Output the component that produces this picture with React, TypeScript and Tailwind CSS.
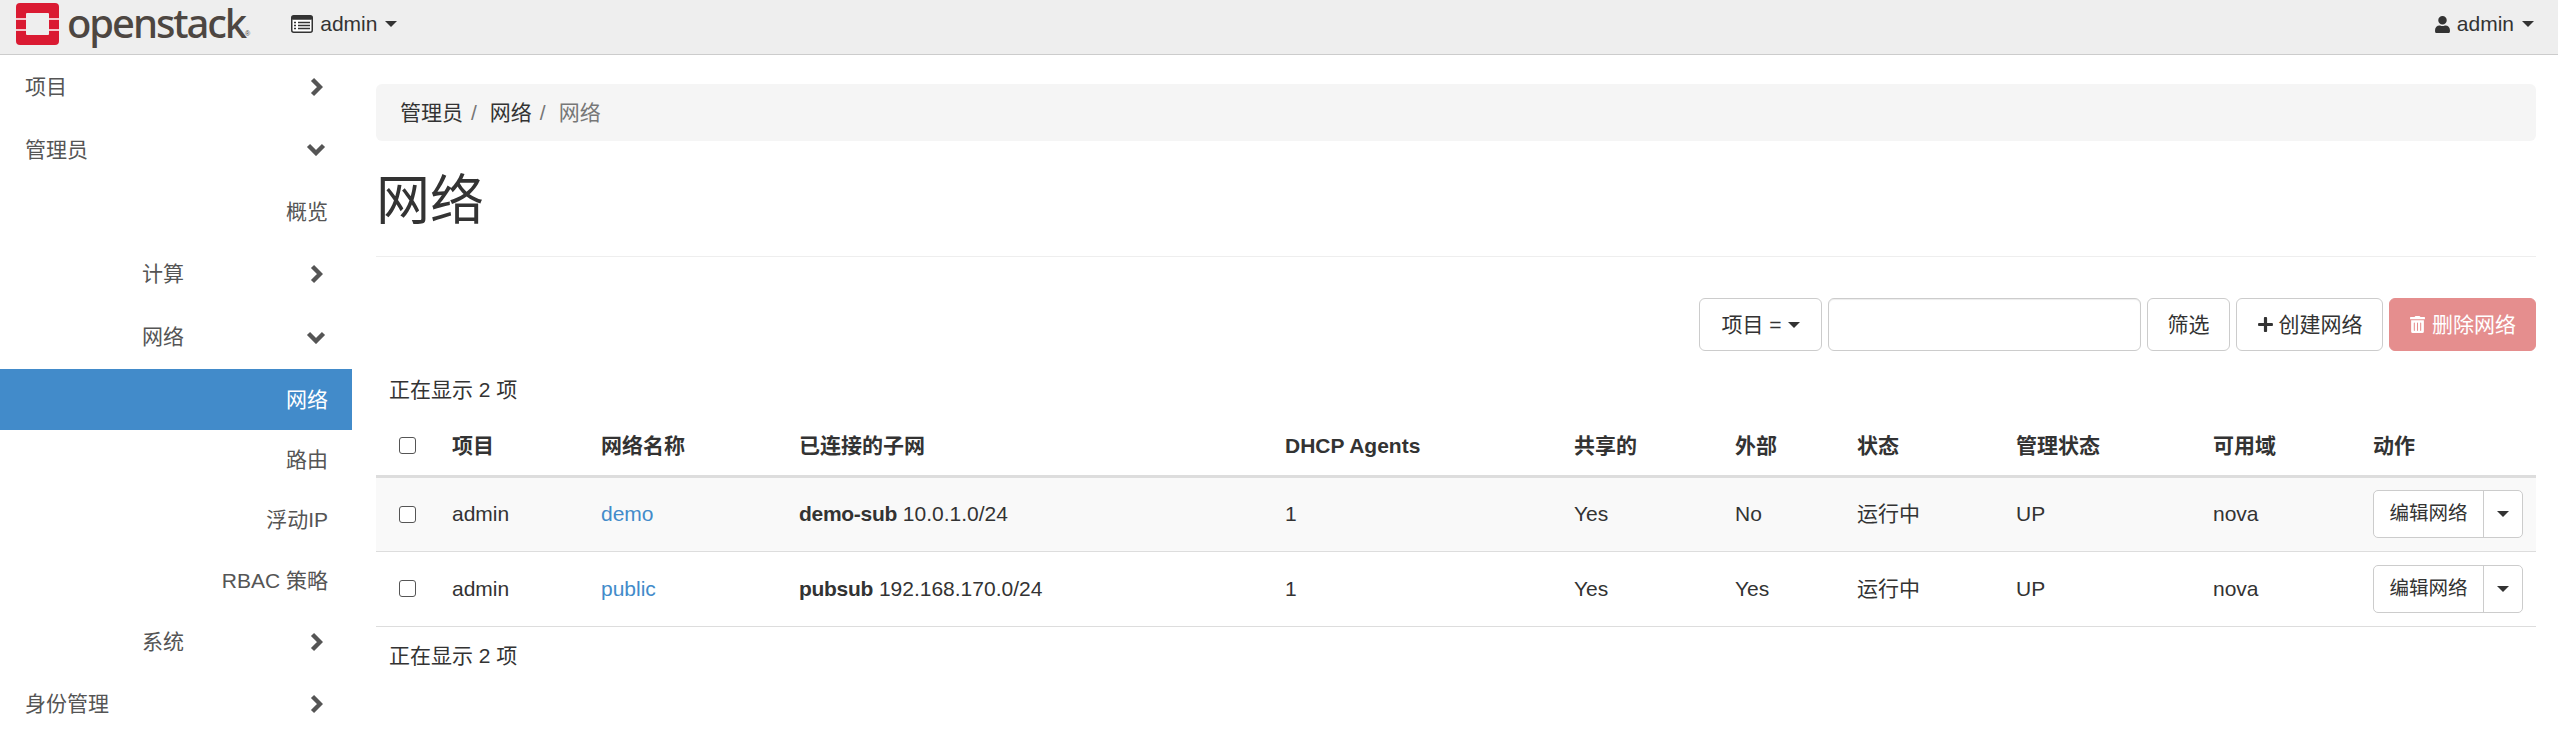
import { FaPlus, FaTrashAlt, FaUser } from "react-icons/fa";

const font = { fontFamily: '"Liberation Sans", "Noto Sans CJK SC", sans-serif' };

function Caret({ className = "" }: { className?: string }) {
  return <span className={`inline-block w-0 h-0 border-x-[6px] border-x-transparent border-t-[6px] border-t-[#333] ${className}`} />;
}

function ChevronRight() {
  return (
    <svg width="13" height="20" viewBox="0 0 13 20" className="mr-[5px]">
      <path d="M2.5 2.5 L10 10 L2.5 17.5" fill="none" stroke="#555" strokeWidth="4.4" />
    </svg>
  );
}

function ChevronDown() {
  return (
    <svg width="20" height="13" viewBox="0 0 20 13" className="mr-[2px]">
      <path d="M2.5 2.5 L10 10 L17.5 2.5" fill="none" stroke="#555" strokeWidth="4.4" />
    </svg>
  );
}

function ListIcon() {
  return (
    <svg width="22" height="18" viewBox="0 0 22 18">
      <rect x="0.75" y="0.75" width="20.5" height="16.5" rx="2" fill="#fff" stroke="#333" strokeWidth="1.5" />
      <rect x="0.75" y="0.75" width="20.5" height="4" rx="1.5" fill="#333" />
      <path d="M3 7.5H5M7 7.5H19M3 10.5H5M7 10.5H19M3 13.5H5M7 13.5H19" stroke="#333" strokeWidth="1.5" />
    </svg>
  );
}

function Logo() {
  return (
    <div className="flex items-center">
      <svg width="43" height="42" viewBox="0 0 43 42" className="ml-4">
        <rect width="43" height="42" rx="4" fill="#da1a32" />
        <rect x="10" y="10" width="23" height="22" rx="1" fill="#eeeeee" />
        <rect x="0" y="15" width="10" height="2" fill="#f5c6cc" />
        <rect x="0" y="26" width="10" height="2" fill="#f5c6cc" />
        <rect x="33" y="15" width="10" height="2" fill="#f5c6cc" />
        <rect x="33" y="26" width="10" height="2" fill="#f5c6cc" />
      </svg>
      <span className="ml-[8px] text-[40px] leading-[44px] font-medium text-[#4d4641] tracking-[-2.1px] pb-[3px]" style={{ fontFamily: '"Noto Sans", sans-serif' }}>
        openstack
      </span>
      <span className="text-[7px] leading-[8px] text-[#4d4641] self-end mb-[10px]">®</span>
    </div>
  );
}

function SideRow({ label, level, down, className }: { label: string; level: 0 | 1; down?: boolean; className: string }) {
  return (
    <div className={`flex items-center pr-[24px] text-[#555] ${level === 0 ? "pl-[25px]" : "pl-[142px]"} ${className}`}>
      <span className="flex-1 whitespace-nowrap">{label}</span>
      {down ? <ChevronDown /> : <ChevronRight />}
    </div>
  );
}

function Leaf({ label, active, className }: { label: string; active?: boolean; className: string }) {
  return (
    <div className={`flex items-center justify-end pr-[24px] whitespace-nowrap ${active ? "bg-[#428bca] text-white" : "text-[#555]"} ${className}`}>
      {label}
    </div>
  );
}

function Check() {
  return <span className="block w-[17px] h-[17px] rounded-[3px] border border-[#555] bg-white" />;
}

const headers = ["项目", "网络名称", "已连接的子网", "DHCP Agents", "共享的", "外部", "状态", "管理状态", "可用域", "动作"];

const rows = [
  { name: "demo", sub: "demo-sub", cidr: "10.0.1.0/24", ext: "No" },
  { name: "public", sub: "pubsub", cidr: "192.168.170.0/24", ext: "Yes" },
];

export default function App() {
  return (
    <div className="h-screen overflow-hidden bg-white text-[#333] text-[21px]" style={font}>
      {/* top bar */}
      <div className="flex items-center h-[55px] pb-[6px] bg-[#eeeeee] border-b border-[#ccc]">
        <Logo />
        <div className="flex items-center ml-[41px]">
          <ListIcon />
          <span className="ml-[7px]">admin</span>
          <Caret className="ml-2" />
        </div>
        <div className="flex items-center ml-auto mr-[24px]">
          <FaUser className="text-[17px]" />
          <span className="ml-[6px]">admin</span>
          <Caret className="ml-2" />
        </div>
      </div>

      <div className="flex">
        {/* sidebar */}
        <div className="w-[352px] shrink-0 pt-[1px]">
          <SideRow label="项目" level={0} className="h-[62px]" />
          <SideRow label="管理员" level={0} down className="h-[63px]" />
          <Leaf label="概览" className="h-[62px]" />
          <SideRow label="计算" level={1} className="h-[62px]" />
          <SideRow label="网络" level={1} down className="h-[64px]" />
          <Leaf label="网络" active className="h-[61px]" />
          <Leaf label="路由" className="h-[60px]" />
          <Leaf label="浮动IP" className="h-[60px]" />
          <Leaf label="RBAC 策略" className="h-[61px]" />
          <SideRow label="系统" level={1} className="h-[62px]" />
          <SideRow label="身份管理" level={0} className="h-[62px]" />
        </div>

        {/* main */}
        <div className="flex-1 pl-[24px] pr-[22px] pt-[29px]">
          <div className="flex items-center h-[57px] px-[24px] pt-[1px] bg-[#f5f5f5] rounded-[6px]">
            <span>管理员</span>
            <span className="text-[#777] mx-[8px]">/</span>
            <span className="ml-[5px]">网络</span>
            <span className="text-[#777] mx-[8px]">/</span>
            <span className="ml-[5px] text-[#777]">网络</span>
          </div>

          <div className="h-[116px] pt-[5px] border-b border-[#eee] flex items-center">
            <h1 className="text-[54px] leading-none font-normal">网络</h1>
          </div>

          <div className="flex justify-end gap-[6px] mt-[41px]">
            <button className="flex items-center justify-center w-[123px] h-[53px] border border-[#ccc] rounded-[6px] bg-white">
              项目 =<Caret className="ml-[6px]" />
            </button>
            <div className="w-[313px] h-[53px] border border-[#ccc] rounded-[6px] bg-white shadow-[inset_0_1px_1px_rgba(0,0,0,0.075)]" />
            <button className="w-[83px] h-[53px] border border-[#ccc] rounded-[6px] bg-white">筛选</button>
            <button className="flex items-center justify-center w-[147px] h-[53px] border border-[#ccc] rounded-[6px] bg-white">
              <FaPlus className="text-[17px] mr-[5px]" />
              创建网络
            </button>
            <button className="flex items-center justify-center w-[147px] h-[53px] border border-[#e58e8e] rounded-[6px] bg-[#e58e8e] text-white">
              <FaTrashAlt className="text-[17px] mr-[6px]" />
              删除网络
            </button>
          </div>

          <div className="mt-[25px] pl-[13px] h-[28px] leading-[28px]">正在显示 2 项</div>

          <table className="w-[2160px] table-fixed border-collapse mt-[13px]">
            <colgroup>
              <col className="w-[64px]" />
              <col className="w-[149px]" />
              <col className="w-[198px]" />
              <col className="w-[486px]" />
              <col className="w-[289px]" />
              <col className="w-[161px]" />
              <col className="w-[122px]" />
              <col className="w-[159px]" />
              <col className="w-[197px]" />
              <col className="w-[160px]" />
              <col className="w-[175px]" />
            </colgroup>
            <thead>
              <tr className="h-[59px] border-b-[3px] border-[#ddd]">
                <th className="pl-[23px]"><Check /></th>
                {headers.map((h) => (
                  <th key={h} className="text-left px-[12px] font-bold">{h}</th>
                ))}
              </tr>
            </thead>
            <tbody>
              {rows.map((r, i) => (
                <tr key={r.name} className={`h-[75px] border-b border-[#ddd] ${i === 0 ? "bg-[#f9f9f9]" : ""}`}>
                  <td className="pl-[23px]"><Check /></td>
                  <td className="px-[12px]">admin</td>
                  <td className="px-[12px] text-[#428bca]">{r.name}</td>
                  <td className="px-[12px]"><b className="tracking-[-0.3px]">{r.sub}</b> {r.cidr}</td>
                  <td className="px-[12px]">1</td>
                  <td className="px-[12px]">Yes</td>
                  <td className="px-[12px]">{r.ext}</td>
                  <td className="px-[12px]">运行中</td>
                  <td className="px-[12px]">UP</td>
                  <td className="px-[12px]">nova</td>
                  <td className="px-[12px]">
                    <div className="flex w-[150px] h-[48px] border border-[#ccc] rounded-[5px] bg-white text-[19.5px]">
                      <span className="flex items-center justify-center w-[110px] border-r border-[#ccc]">编辑网络</span>
                      <span className="flex items-center justify-center flex-1"><Caret /></span>
                    </div>
                  </td>
                </tr>
              ))}
            </tbody>
          </table>

          <div className="mt-[13px] pl-[13px]">正在显示 2 项</div>
        </div>
      </div>
    </div>
  );
}
